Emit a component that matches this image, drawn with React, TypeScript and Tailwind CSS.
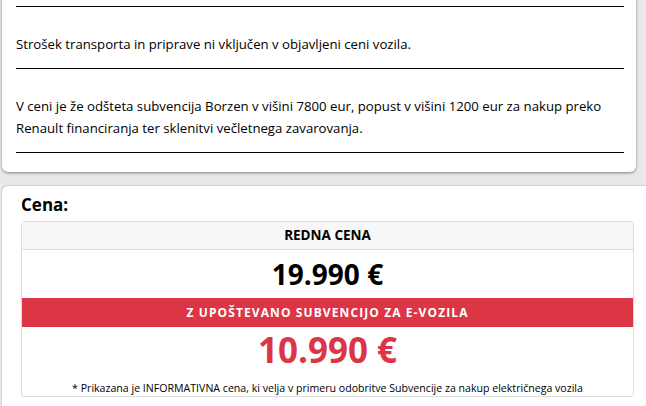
export default function App() {
  const notes = [
    'Strošek transporta in priprave ni vključen v objavljeni ceni vozila.',
    'V ceni je že odšteta subvencija Borzen v višini 7800 eur, popust v višini 1200 eur za nakup preko Renault financiranja ter sklenitvi večletnega zavarovanja.',
  ]

  return (
    <div className="flex h-[406px] w-[646px] flex-col overflow-hidden bg-[#e9e9e9] font-['Open_Sans',sans-serif] text-black">
      {/* Vehicle notes card */}
      <div className="-mt-[10px] ml-[2px] mr-[10px] rounded-b-md bg-white pl-[14px] pr-[12px] pb-[19px] shadow-[0_1px_3px_rgba(0,0,0,0.45)]">
        <div className="border-b border-black pt-[16px]" />
        {notes.map((n) => (
          <div key={n}>
            <p className="pt-[26px] pb-[13px] text-[13.2px] leading-[22px]">{n}</p>
            <div className="border-b border-black" />
          </div>
        ))}
      </div>

      {/* Price card */}
      <div className="mt-[14px] ml-[2px] flex-1 rounded-tl-md bg-white pl-[19px] pr-[12px] pt-[8px] shadow-[0_0_2px_rgba(0,0,0,0.35)]">
        <h3 className="text-[17px] font-bold leading-[22px]">Cena:</h3>
        <div className="mt-[5px] rounded-[3px] border border-[#dcdcdc] text-center">
          <div className="flex h-[28px] items-center justify-center border-b border-[#dcdcdc] bg-[#f7f7f7] text-[13.5px] font-bold">
            REDNA CENA
          </div>
          <div className="flex h-[48px] items-center justify-center text-[28px] font-bold">19.990 €</div>
          <div className="flex h-[29px] items-center justify-center bg-[#dc3545] text-[12px] font-bold tracking-[1.1px] text-white">
            Z UPOŠTEVANO SUBVENCIJO ZA E-VOZILA
          </div>
          <div className="flex h-[46px] items-center justify-center text-[35px] font-bold text-[#dc3545]">10.990 €</div>
          <p className="pt-[8px] pb-[1px] text-[10.6px] leading-[14px]">
            * Prikazana je INFORMATIVNA cena, ki velja v primeru odobritve Subvencije za nakup električnega vozila
          </p>
        </div>
      </div>
    </div>
  )
}
